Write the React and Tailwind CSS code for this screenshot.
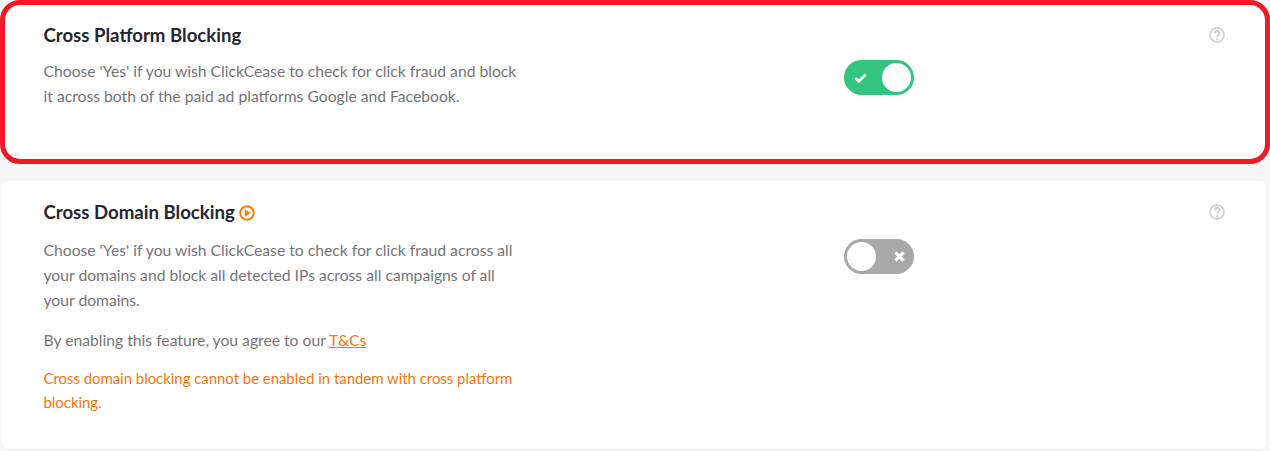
import React from "react";

const Help = () => (
  <svg width="16" height="16" viewBox="0 0 16 16" fill="none" className="block">
    <circle cx="8" cy="8" r="7" stroke="#cfd2d6" strokeWidth="1.8" />
    <path d="M5.5 6.5C5.5 4.9 6.7 4 8 4s2.6.8 2.6 2.2c0 2-2.5 1.8-2.5 3.6" stroke="#cfd2d6" strokeWidth="1.8" fill="none" />
    <circle cx="8.1" cy="12" r="1.1" fill="#cfd2d6" />
  </svg>
);

const Toggle = ({ on }) => (
  <div className={on ? "w-[70px] h-[35px] rounded-full bg-[#33c481] flex items-center justify-between pl-[10px] pr-[3px]" : "w-[70px] h-[35px] rounded-full bg-[#a9a9a9] flex items-center justify-between pl-[3px] pr-[9px]"}>
    {on ? (
      <>
        <svg width="13" height="10" viewBox="0 0 13 10" fill="none">
          <path d="M1.3 5 4.8 8.2 11.7 1.6" stroke="#fff" strokeWidth="2.8" />
        </svg>
        <div className="w-[29px] h-[29px] rounded-full bg-white" />
      </>
    ) : (
      <>
        <div className="w-[29px] h-[29px] rounded-full bg-white" />
        <svg width="11" height="11" viewBox="0 0 11 11" fill="none">
          <path d="M1.4 1.4 9.6 9.6M9.6 1.4 1.4 9.6" stroke="#fff" strokeWidth="3.2" />
        </svg>
      </>
    )}
  </div>
);

export default function App() {
  return (
    <div className="w-[1270px] h-[451px] overflow-hidden bg-[#f6f6f6] font-['Lato','Open_Sans',sans-serif] text-[15.7px] leading-[25px] text-[#747478]">
      <section className="h-[164px] border-[5px] border-[#ed1c24] rounded-[20px] bg-white pl-[38.5px] pr-[40px] pt-[18px] flex">
        <div className="w-[474px]">
          <h2 className="text-[18.6px] leading-[25px] font-bold text-[#26262e]">Cross Platform Blocking</h2>
          <p className="mt-[11px]">Choose 'Yes' if you wish ClickCease to check for click fraud and block it across both of the paid ad platforms Google and Facebook.</p>
        </div>
        <div className="ml-[326px] mt-[37px]"><Toggle on /></div>
        <div className="ml-auto mt-[4px]"><Help /></div>
      </section>
      <section className="mt-[17px] ml-[2px] w-[1264px] h-[269px] rounded-[6px] bg-white border-b border-[#ececec] pl-[41.5px] pr-[41px] pt-[19px] flex">
        <div className="w-[474px]">
          <h2 className="text-[18.6px] leading-[25px] font-bold text-[#26262e] flex items-center gap-[4px]">
            Cross Domain Blocking
            <svg width="16" height="16" viewBox="0 0 16 16" fill="none">
              <circle cx="8" cy="8" r="6.8" stroke="#f77f0e" strokeWidth="2" />
              <path d="M5.8 4.3 11.8 8 5.8 11.7Z" fill="#f77f0e" />
            </svg>
          </h2>
          <p className="mt-[13px]">Choose 'Yes' if you wish ClickCease to check for click fraud across all your domains and block all detected IPs across all campaigns of all your domains.</p>
          <p className="mt-[14.5px]">By enabling this feature, you agree to our <a className="text-[#f7730e] underline">T&amp;Cs</a></p>
          <p className="mt-[13px] text-[#f7730e] text-[14.9px] leading-[24.5px]">Cross domain blocking cannot be enabled in tandem with cross platform blocking.</p>
        </div>
        <div className="ml-[326.5px] mt-[39px]"><Toggle /></div>
        <div className="ml-auto mt-[4px]"><Help /></div>
      </section>
    </div>
  );
}
